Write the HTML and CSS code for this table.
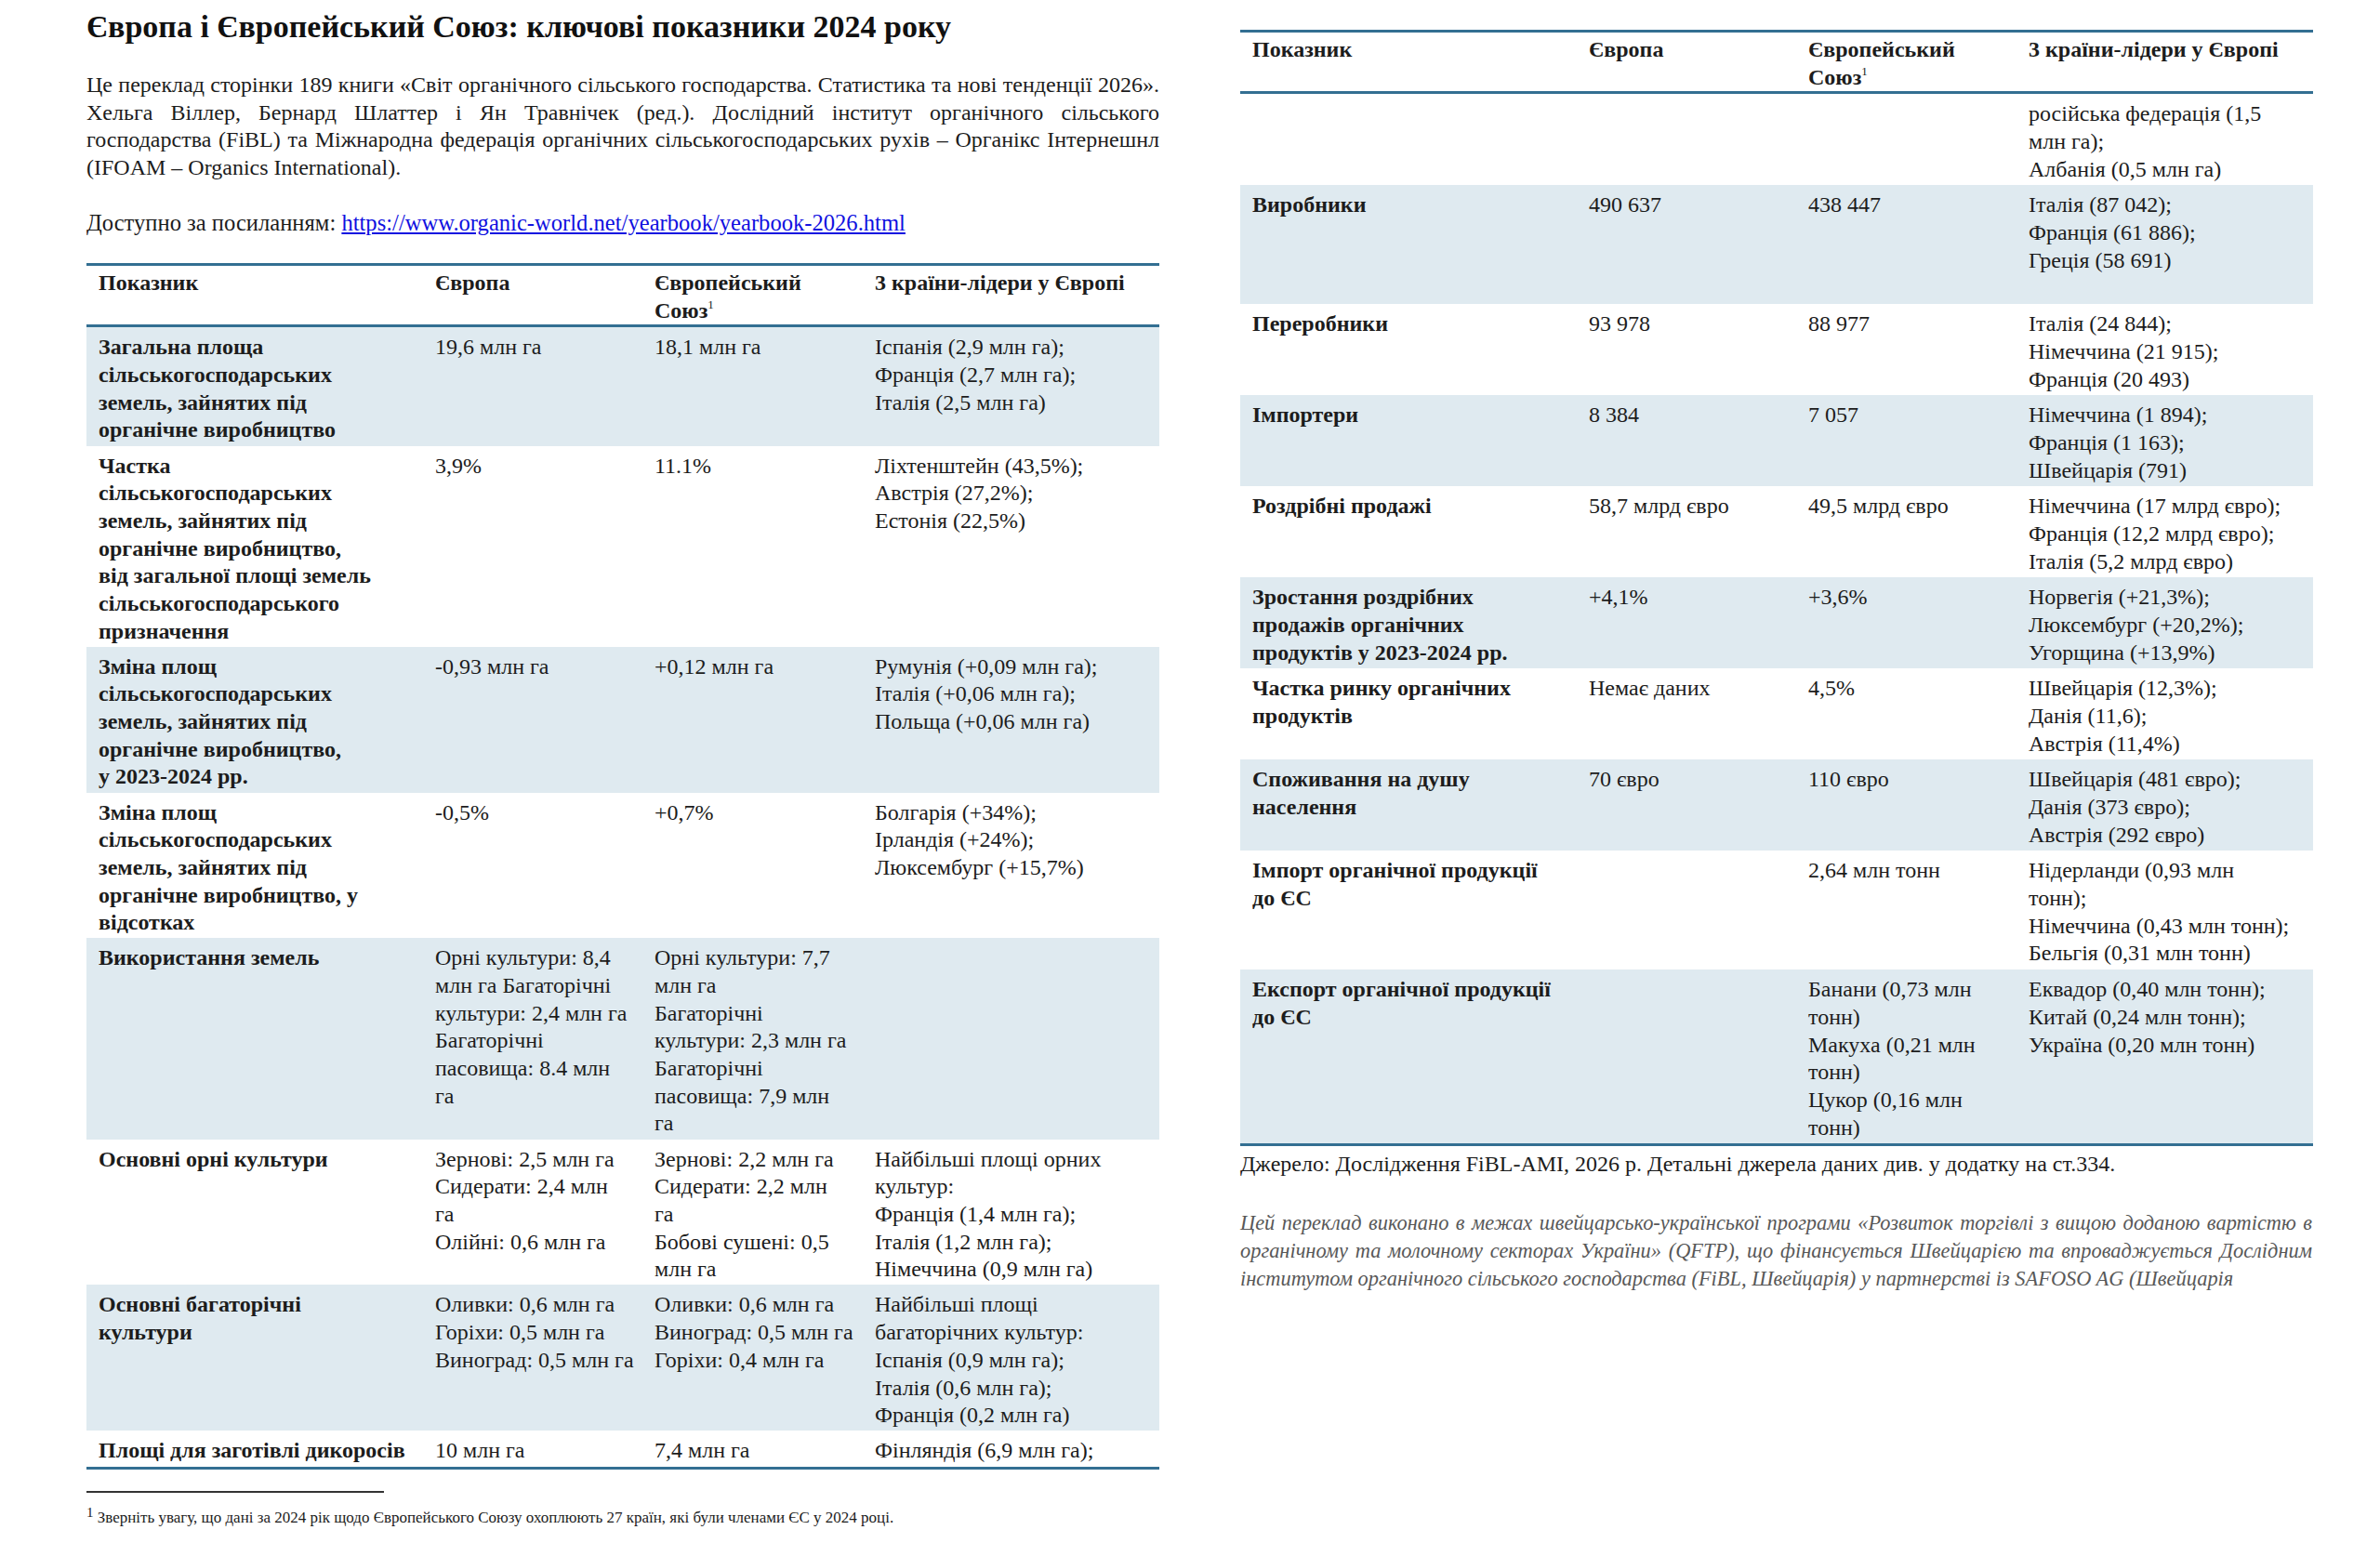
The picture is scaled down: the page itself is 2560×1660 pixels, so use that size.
FILE: index.html
```html
<!DOCTYPE html>
<html lang="uk">
<head>
<meta charset="utf-8">
<title>Європа і Європейський Союз: ключові показники 2024 року</title>
<link rel="stylesheet" href="styles.css">
</head>
<body>
<div class="page">
  <section class="col col-left">
    <h1 class="title">Європа і Європейський Союз: ключові показники 2024 року</h1>
    <p class="intro">
      <span class="jline">Це переклад сторінки 189 книги «Світ органічного сільського господарства. Статистика та нові тенденції 2026».</span>
      <span class="jline">Хельга Віллер, Бернард Шлаттер і Ян Травнічек (ред.). Дослідний інститут органічного сільського</span>
      <span class="jline">господарства (FiBL) та Міжнародна федерація органічних сільськогосподарських рухів – Органікс Інтернешнл</span>
      <span class="lline">(IFOAM – Organics International).</span>
    </p>
    <p class="linkline">Доступно за посиланням: <a href="#">https://www.organic-world.net/yearbook/yearbook-2026.html</a></p>

    <table class="data">
      <colgroup><col class="c1"><col class="c2"><col class="c3"><col class="c4"></colgroup>
      <thead>
        <tr><th>Показник</th><th>Європа</th><th>Європейський<br>Союз<sup>1</sup></th><th>3 країни-лідери у Європі</th></tr>
      </thead>
      <tbody>
        <tr class="sh"><td>Загальна площа<br>сільськогосподарських<br>земель, зайнятих під<br>органічне виробництво</td><td>19,6 млн га</td><td>18,1 млн га</td><td>Іспанія (2,9 млн га);<br>Франція (2,7 млн га);<br>Італія (2,5 млн га)</td></tr>
        <tr><td>Частка<br>сільськогосподарських<br>земель, зайнятих під<br>органічне виробництво,<br>від загальної площі земель<br>сільськогосподарського<br>призначення</td><td>3,9%</td><td>11.1%</td><td>Ліхтенштейн (43,5%);<br>Австрія (27,2%);<br>Естонія (22,5%)</td></tr>
        <tr class="sh"><td>Зміна площ<br>сільськогосподарських<br>земель, зайнятих під<br>органічне виробництво,<br>у 2023-2024 рр.</td><td>-0,93 млн га</td><td>+0,12 млн га</td><td>Румунія (+0,09 млн га);<br>Італія (+0,06 млн га);<br>Польща (+0,06 млн га)</td></tr>
        <tr><td>Зміна площ<br>сільськогосподарських<br>земель, зайнятих під<br>органічне виробництво, у<br>відсотках</td><td>-0,5%</td><td>+0,7%</td><td>Болгарія (+34%);<br>Ірландія (+24%);<br>Люксембург (+15,7%)</td></tr>
        <tr class="sh"><td>Використання земель</td><td>Орні культури: 8,4<br>млн га Багаторічні<br>культури: 2,4 млн га<br>Багаторічні<br>пасовища: 8.4 млн<br>га</td><td>Орні культури: 7,7<br>млн га<br>Багаторічні<br>культури: 2,3 млн га<br>Багаторічні<br>пасовища: 7,9 млн<br>га</td><td></td></tr>
        <tr><td>Основні орні культури</td><td>Зернові: 2,5 млн га<br>Сидерати: 2,4 млн<br>га<br>Олійні: 0,6 млн га</td><td>Зернові: 2,2 млн га<br>Сидерати: 2,2 млн<br>га<br>Бобові сушені: 0,5<br>млн га</td><td>Найбільші площі орних<br>культур:<br>Франція (1,4 млн га);<br>Італія (1,2 млн га);<br>Німеччина (0,9 млн га)</td></tr>
        <tr class="sh"><td>Основні багаторічні<br>культури</td><td>Оливки: 0,6 млн га<br>Горіхи: 0,5 млн га<br>Виноград: 0,5 млн га</td><td>Оливки: 0,6 млн га<br>Виноград: 0,5 млн га<br>Горіхи: 0,4 млн га</td><td>Найбільші площі<br>багаторічних культур:<br>Іспанія (0,9 млн га);<br>Італія (0,6 млн га);<br>Франція (0,2 млн га)</td></tr>
        <tr class="last"><td>Площі для заготівлі дикоросів</td><td>10 млн га</td><td>7,4 млн га</td><td>Фінляндія (6,9 млн га);</td></tr>
      </tbody>
    </table>

    <div class="footnotes">
      <hr class="fn-rule">
      <p class="fn"><sup>1</sup> Зверніть увагу, що дані за 2024 рік щодо Європейського Союзу охоплюють 27 країн, які були членами ЄС у 2024 році.</p>
    </div>
  </section>

  <section class="col col-right">
    <table class="data data-right">
      <colgroup><col class="c1"><col class="c2"><col class="c3"><col class="c4"></colgroup>
      <thead>
        <tr><th>Показник</th><th>Європа</th><th>Європейський<br>Союз<sup>1</sup></th><th>3 країни-лідери у Європі</th></tr>
      </thead>
      <tbody>
        <tr><td></td><td></td><td></td><td>російська федерація (1,5<br>млн га);<br>Албанія (0,5 млн га)</td></tr>
        <tr class="sh"><td>Виробники</td><td>490 637</td><td>438 447</td><td class="extra">Італія (87 042);<br>Франція (61 886);<br>Греція (58 691)</td></tr>
        <tr><td>Переробники</td><td>93 978</td><td>88 977</td><td>Італія (24 844);<br>Німеччина (21 915);<br>Франція (20 493)</td></tr>
        <tr class="sh"><td>Імпортери</td><td>8 384</td><td>7 057</td><td>Німеччина (1 894);<br>Франція (1 163);<br>Швейцарія (791)</td></tr>
        <tr><td>Роздрібні продажі</td><td>58,7 млрд євро</td><td>49,5 млрд євро</td><td>Німеччина (17 млрд євро);<br>Франція (12,2 млрд євро);<br>Італія (5,2 млрд євро)</td></tr>
        <tr class="sh"><td>Зростання роздрібних<br>продажів органічних<br>продуктів у 2023-2024 рр.</td><td>+4,1%</td><td>+3,6%</td><td>Норвегія (+21,3%);<br>Люксембург (+20,2%);<br>Угорщина (+13,9%)</td></tr>
        <tr><td>Частка ринку органічних<br>продуктів</td><td>Немає даних</td><td>4,5%</td><td>Швейцарія (12,3%);<br>Данія (11,6);<br>Австрія (11,4%)</td></tr>
        <tr class="sh"><td>Споживання на душу<br>населення</td><td>70 євро</td><td>110 євро</td><td>Швейцарія (481 євро);<br>Данія (373 євро);<br>Австрія (292 євро)</td></tr>
        <tr><td>Імпорт органічної продукції<br>до ЄС</td><td></td><td>2,64 млн тонн</td><td>Нідерланди (0,93 млн<br>тонн);<br>Німеччина (0,43 млн тонн);<br>Бельгія (0,31 млн тонн)</td></tr>
        <tr class="sh last"><td>Експорт органічної продукції<br>до ЄС</td><td></td><td>Банани (0,73 млн<br>тонн)<br>Макуха (0,21 млн<br>тонн)<br>Цукор (0,16 млн<br>тонн)</td><td>Еквадор (0,40 млн тонн);<br>Китай (0,24 млн тонн);<br>Україна (0,20 млн тонн)</td></tr>
      </tbody>
    </table>
    <p class="source">Джерело: Дослідження FiBL-AMI, 2026 р. Детальні джерела даних див. у додатку на ст.334.</p>
    <p class="note">
      <span class="jline">Цей переклад виконано в межах швейцарсько-української програми «Розвиток торгівлі з вищою доданою вартістю в</span>
      <span class="jline">органічному та молочному секторах України» (QFTP), що фінансується Швейцарією та впроваджується Дослідним</span>
      <span class="lline">інститутом органічного сільського господарства (FiBL, Швейцарія) у партнерстві із SAFOSO AG (Швейцарія</span>
    </p>
  </section>
</div>
</body>
</html>
```

FILE: styles.css
```css
html, body {
  margin: 0;
  padding: 0;
  background: #ffffff;
}

body {
  font-family: "Liberation Serif", "Times New Roman", serif;
  font-size: 24px;
  color: #1c1c1c;
}

.page {
  display: flex;
  gap: 87px;
  padding-left: 93px;
}

.col-left {
  width: 1154px;
}

.col-right {
  width: 1153px;
}

.title {
  margin: 10px 0 0;
  font-size: 34px;
  line-height: 38px;
  font-weight: bold;
  color: #111;
}

.intro {
  margin: 29px 0 0;
  line-height: 29.6px;
}

.jline,
.lline {
  display: block;
  white-space: nowrap;
}

.jline {
  text-align: justify;
  text-align-last: justify;
}

.lline {
  text-align: left;
}

.linkline {
  margin: 30px 0 0;
  line-height: 29.6px;
  font-size: 24.6px;
}

.linkline a {
  color: #1010e0;
  text-decoration: underline;
}

.data {
  border-collapse: separate;
  border-spacing: 0;
  width: 100%;
  table-layout: fixed;
  margin-top: 28px;
  line-height: 29.67px;
}

.data col.c1 { width: 362px; }
.data col.c2 { width: 236px; }
.data col.c3 { width: 237px; }
.data col.c4 { width: 319px; }

.data th {
  text-align: left;
  font-weight: bold;
  vertical-align: top;
  padding: 4px 13px 0;
  border-top: 3px solid #336f92;
  border-bottom: 3px solid #336f92;
  white-space: nowrap;
}

.data td {
  vertical-align: top;
  padding: 7px 4px 1.5px 13px;
  white-space: nowrap;
}

.data-right td {
  padding-bottom: 2px;
}

.data td:first-child {
  font-weight: bold;
}

.data tr.sh td {
  background: #dfeaf0;
}

.data tr.last td {
  border-bottom: 3px solid #336f92;
}

.data td.extra {
  padding-bottom: 32px;
}

sup {
  font-size: 13px;
  line-height: 0;
  vertical-align: 10px;
  font-weight: normal;
}

.data-right {
  margin-top: 32px;
}

.footnotes {
  margin-top: 23px;
}

.fn-rule {
  width: 320px;
  margin: 0;
  border: 0;
  border-top: 2px solid #333;
  height: 0;
  text-align: left;
}

.fn {
  margin: 16px 0 0;
  font-size: 17px;
  line-height: 22px;
}

.fn sup {
  font-size: 15px;
  vertical-align: 6px;
}

.source {
  margin: 4px 0 0;
  line-height: 30px;
}

.note {
  margin: 34px 0 0;
  line-height: 30px;
  font-size: 22.4px;
  font-style: italic;
  color: #585858;
}
```
